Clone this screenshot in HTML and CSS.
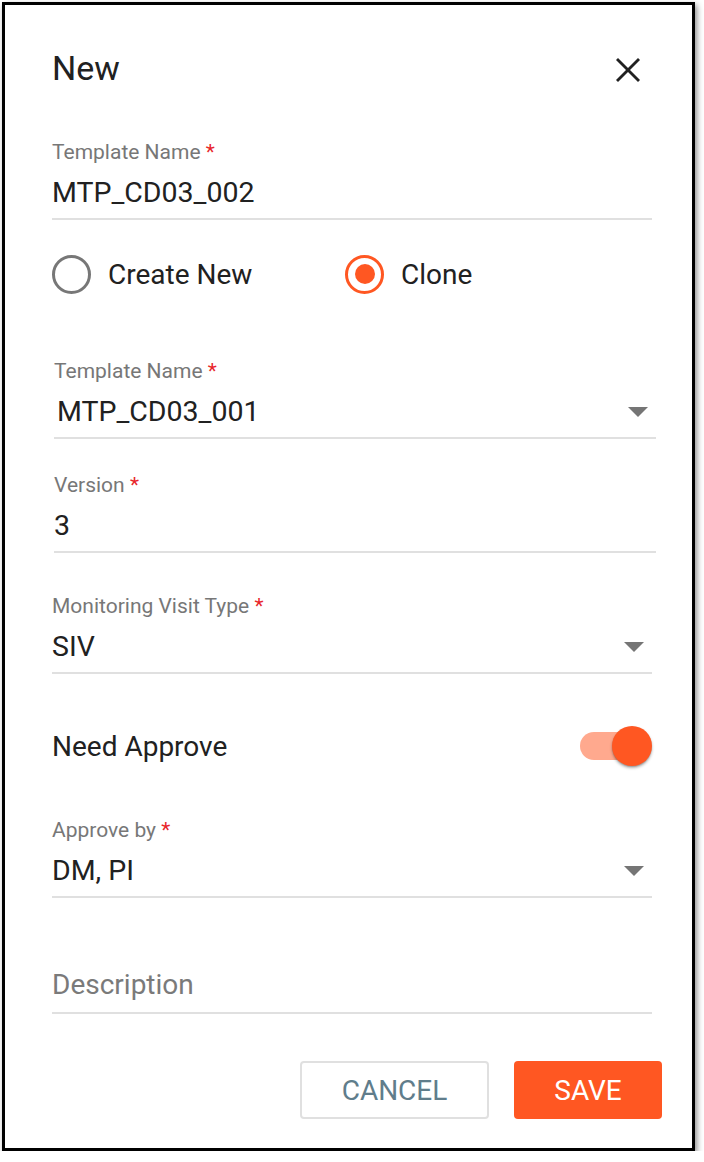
FILE: index.html
```html
<!DOCTYPE html>
<html lang="en">
<head>
<meta charset="utf-8">
<title>New</title>
<link rel="stylesheet" href="styles.css">
</head>
<body>
<div class="dialog">
  <div class="header">
    <div class="title">New</div>
    <svg class="close" width="24" height="24" viewBox="0 0 24 24" aria-label="Close">
      <line x1="1" y1="1" x2="23" y2="23"/>
      <line x1="23" y1="1" x2="1" y2="23"/>
    </svg>
  </div>

  <div class="field f1">
    <div class="label">Template Name <span class="req">*</span></div>
    <div class="value">MTP_CD03_002</div>
  </div>

  <div class="radios">
    <div class="radio radio-first">
      <span class="ring"></span>
      <span class="radio-text">Create New</span>
    </div>
    <div class="radio">
      <span class="ring checked"><span class="dot"></span></span>
      <span class="radio-text">Clone</span>
    </div>
  </div>

  <div class="field f2 wide">
    <div class="label">Template Name <span class="req">*</span></div>
    <div class="select-row">
      <div class="value indent">MTP_CD03_001</div>
      <svg class="arrow" width="20" height="10" viewBox="0 0 20 10"><polygon points="0,0 20,0 10,10"/></svg>
    </div>
  </div>

  <div class="field f3 wide">
    <div class="label">Version <span class="req">*</span></div>
    <div class="value">3</div>
  </div>

  <div class="field f4">
    <div class="label">Monitoring Visit Type <span class="req">*</span></div>
    <div class="select-row">
      <div class="value">SIV</div>
      <svg class="arrow" width="20" height="10" viewBox="0 0 20 10"><polygon points="0,0 20,0 10,10"/></svg>
    </div>
  </div>

  <div class="toggle-row">
    <div class="toggle-text">Need Approve</div>
    <div class="switch">
      <span class="track"></span>
      <span class="thumb"></span>
    </div>
  </div>

  <div class="field f5">
    <div class="label">Approve by <span class="req">*</span></div>
    <div class="select-row">
      <div class="value">DM, PI</div>
      <svg class="arrow" width="20" height="10" viewBox="0 0 20 10"><polygon points="0,0 20,0 10,10"/></svg>
    </div>
  </div>

  <div class="field desc">
    <div class="value placeholder">Description</div>
  </div>

  <div class="actions">
    <button class="btn btn-cancel">CANCEL</button>
    <button class="btn btn-save">SAVE</button>
  </div>
</div>
</body>
</html>
```

FILE: styles.css
```css
* {
  box-sizing: border-box;
}

html, body {
  margin: 0;
  padding: 0;
  background: #ffffff;
}

body {
  font-family: Roboto, "Liberation Sans", Arial, sans-serif;
  color: #212121;
}

.dialog {
  margin: 2px 0 0 2px;
  width: 693px;
  height: 1149px;
  border: 3px solid #000000;
  background: #ffffff;
  box-shadow: 2px 3px 6px rgba(0, 0, 0, 0.45);
  padding: 43px 40px 0 47px;
}

.header {
  display: flex;
  justify-content: space-between;
  align-items: flex-start;
}

.title {
  font-size: 34px;
  line-height: 40px;
  font-weight: 400;
  color: #212121;
}

.close {
  margin-top: 10px;
  margin-right: 12px;
  stroke: #212121;
  stroke-width: 2.8;
}

.field {
  border-bottom: 2px solid #e0e0e0;
  padding-bottom: 9px;
}

.label {
  font-size: 21px;
  line-height: 24px;
  color: #777777;
  margin-bottom: 13px;
}

.req {
  color: #e8262b;
}

.value {
  font-size: 28.5px;
  line-height: 32px;
  color: #212121;
}

.value.indent {
  padding-left: 3px;
}

.placeholder {
  font-size: 28px;
  color: #7a7a7a;
}

.select-row {
  display: flex;
  justify-content: space-between;
  align-items: center;
}

.arrow {
  fill: #757575;
  margin-right: 8px;
  margin-top: 0;
}

.wide {
  margin-left: 2px;
  margin-right: -4px;
}

.f1 {
  margin-top: 52px;
}

.radios {
  display: flex;
  margin-top: 34px;
  height: 40px;
  align-items: center;
}

.radio {
  display: flex;
  align-items: center;
  gap: 17px;
}

.radio-first {
  width: 293px;
}

.ring {
  width: 39px;
  height: 39px;
  border-radius: 50%;
  border: 3px solid #777777;
  display: flex;
  align-items: center;
  justify-content: center;
}

.ring.checked {
  border-color: #ff5722;
}

.dot {
  width: 20px;
  height: 20px;
  border-radius: 50%;
  background: #ff5722;
}

.radio-text {
  font-size: 28px;
  line-height: 40px;
  padding-top: 2px;
  color: #212121;
}

.f2 {
  margin-top: 65px;
}

.f3 {
  margin-top: 34px;
}

.f4 {
  margin-top: 41px;
}

.toggle-row {
  margin-top: 52px;
  height: 40px;
  display: flex;
  justify-content: space-between;
  align-items: center;
}

.toggle-text {
  font-size: 28px;
  line-height: 32px;
  padding-top: 2px;
  color: #212121;
}

.switch {
  position: relative;
  width: 72px;
  height: 40px;
}

.track {
  position: absolute;
  left: 0;
  top: 6px;
  width: 68px;
  height: 28px;
  border-radius: 14px;
  background: #ffa98e;
}

.thumb {
  position: absolute;
  right: 0;
  top: 0;
  width: 40px;
  height: 40px;
  border-radius: 50%;
  background: #ff5722;
  box-shadow: 0 2px 3px rgba(0, 0, 0, 0.3), 0 1px 1px rgba(0, 0, 0, 0.14);
}

.f5 {
  margin-top: 52px;
}

.desc {
  margin-top: 71px;
  padding-bottom: 11px;
}

.actions {
  margin-top: 47px;
  margin-right: -10px;
  display: flex;
  justify-content: flex-end;
  gap: 25px;
}

.btn {
  height: 58px;
  border-radius: 4px;
  font-family: Roboto, "Liberation Sans", Arial, sans-serif;
  font-size: 28px;
  font-weight: 400;
  cursor: pointer;
  padding: 0;
}

.btn-cancel {
  width: 189px;
  background: #ffffff;
  border: 2px solid #e0e0e0;
  color: #607d8b;
}

.btn-save {
  width: 148px;
  background: #ff5722;
  border: none;
  color: #ffffff;
}
```
